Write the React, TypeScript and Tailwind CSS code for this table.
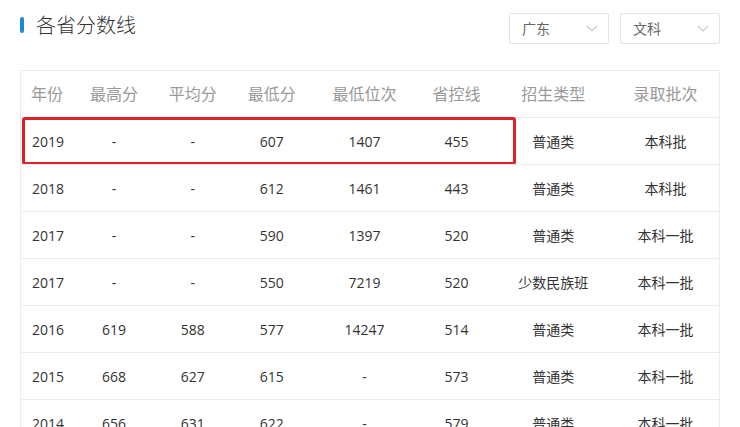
import React from "react";

const rows = [
  ["2019", "-", "-", "607", "1407", "455", "普通类", "本科批"],
  ["2018", "-", "-", "612", "1461", "443", "普通类", "本科批"],
  ["2017", "-", "-", "590", "1397", "520", "普通类", "本科一批"],
  ["2017", "-", "-", "550", "7219", "520", "少数民族班", "本科一批"],
  ["2016", "619", "588", "577", "14247", "514", "普通类", "本科一批"],
  ["2015", "668", "627", "615", "-", "573", "普通类", "本科一批"],
  ["2014", "656", "631", "622", "-", "579", "普通类", "本科一批"],
];
const heads = ["年份", "最高分", "平均分", "最低分", "最低位次", "省控线", "招生类型", "录取批次"];
const widths = ["w-[54px]", "w-[78px]", "w-[80px]", "w-[78px]", "w-[108px]", "w-[76px]", "w-[118px]", "w-[107px]"];

function Chevron() {
  return (
    <svg width="12" height="7" viewBox="0 0 12 7" fill="none">
      <path d="M1 1l5 5 5-5" stroke="#c8c8c8" strokeWidth="1.2" />
    </svg>
  );
}

function Select({ label }: { label: string }) {
  return (
    <div className="w-[100px] h-[31px] border border-[#e3e3e3] rounded-[2px] flex items-center justify-between pl-[12px] pr-[10px] text-[14px] text-[#666]">
      <span>{label}</span>
      <Chevron />
    </div>
  );
}

export default function App() {
  return (
    <div
      className="w-[740px] h-[427px] overflow-hidden bg-white px-5"
      style={{ fontFamily: '"Open Sans","Noto Sans CJK SC",sans-serif' }}
    >
      <div className="flex justify-between pt-[13px]">
        <div className="flex items-center h-[22px] mt-[1px]">
          <div className="w-[4px] h-[16px] rounded-[2px] bg-[#1a8ad0]" />
          <div className="ml-[12px] text-[20px] leading-[22px] text-[#333] font-light" style={{ fontFamily: '"Noto Sans CJK SC",sans-serif' }}>各省分数线</div>
        </div>
        <div className="flex gap-[11px]">
          <Select label="广东" />
          <Select label="文科" />
        </div>
      </div>
      <div className="mt-[26px] w-[700px] border border-[#ececec]">
        <div className="flex h-[46px] items-center text-[16px] text-[#999]">
          {heads.map((h, i) => (
            <div key={i} className={`${widths[i]} ${i === 0 ? "pl-[10px] text-left" : "text-center"}`}>{h}</div>
          ))}
        </div>
        {rows.map((r, ri) => (
          <div key={ri} className="relative flex h-[47px] items-center text-[14px] text-[#333] border-t border-[#ececec]">
            {r.map((c, i) => (
              <div key={i} className={`${widths[i]} ${i === 0 ? "pl-[11px] text-left" : "text-center"}`}>{c}</div>
            ))}
            {ri === 0 && (
              <div className="absolute left-[1px] top-[-1px] w-[494px] h-[48px] border-[3px] border-[#dc2127] rounded-[3px]" />
            )}
          </div>
        ))}
      </div>
    </div>
  );
}
